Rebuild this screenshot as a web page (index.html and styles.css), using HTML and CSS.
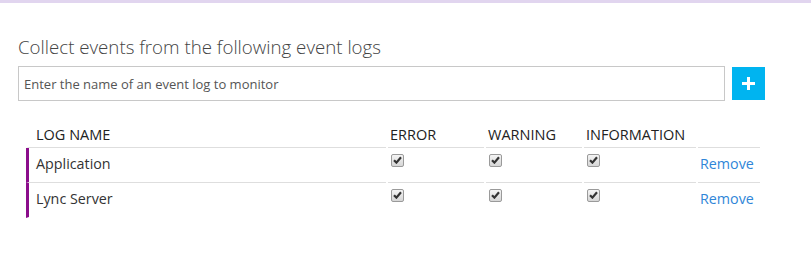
FILE: index.html
```html
<!DOCTYPE html>
<html lang="en">
<head>
    <meta charset="UTF-8">
    <meta name="viewport" content="width=device-width, initial-scale=1.0">
    <title>Event logs</title>
    <link rel="stylesheet" href="styles.css">
</head>
<body>
    <div class="topbar"></div>
    <div class="panel">
        <div class="title">Collect events from the following event logs</div>
        <div class="addrow">
            <input type="text" class="logname" placeholder="Enter the name of an event log to monitor">
            <button class="addbtn" title="Add">
                <svg width="13" height="13" viewBox="0 0 13 13"><path d="M6.5 0V13M0 6.5H13" stroke="#fff" stroke-width="3"/></svg>
            </button>
        </div>
        <div class="logs">
            <div class="row head">
                <div class="cell name">LOG NAME</div>
                <div class="cell">ERROR</div>
                <div class="cell">WARNING</div>
                <div class="cell">INFORMATION</div>
                <div class="cell"></div>
            </div>
            <div class="row">
                <div class="cell name">Application</div>
                <div class="cell"><span class="check"><svg width="9" height="8" viewBox="0 0 9 8"><path d="M1 4.2L3.4 6.6L8 1.2" fill="none" stroke="#333" stroke-width="2.2"/></svg></span></div>
                <div class="cell"><span class="check"><svg width="9" height="8" viewBox="0 0 9 8"><path d="M1 4.2L3.4 6.6L8 1.2" fill="none" stroke="#333" stroke-width="2.2"/></svg></span></div>
                <div class="cell"><span class="check"><svg width="9" height="8" viewBox="0 0 9 8"><path d="M1 4.2L3.4 6.6L8 1.2" fill="none" stroke="#333" stroke-width="2.2"/></svg></span></div>
                <div class="cell"><a href="#" class="remove">Remove</a></div>
            </div>
            <div class="row last">
                <div class="cell name">Lync Server</div>
                <div class="cell"><span class="check"><svg width="9" height="8" viewBox="0 0 9 8"><path d="M1 4.2L3.4 6.6L8 1.2" fill="none" stroke="#333" stroke-width="2.2"/></svg></span></div>
                <div class="cell"><span class="check"><svg width="9" height="8" viewBox="0 0 9 8"><path d="M1 4.2L3.4 6.6L8 1.2" fill="none" stroke="#333" stroke-width="2.2"/></svg></span></div>
                <div class="cell"><span class="check"><svg width="9" height="8" viewBox="0 0 9 8"><path d="M1 4.2L3.4 6.6L8 1.2" fill="none" stroke="#333" stroke-width="2.2"/></svg></span></div>
                <div class="cell"><a href="#" class="remove">Remove</a></div>
            </div>
        </div>
    </div>
</body>
</html>
```

FILE: styles.css
```css
body{
    margin: 0;
    background: #fff;
    font-family: "Open Sans", "Noto Sans", sans-serif;
    color: #333;
}
.topbar{
    height: 3px;
    background: #e1d5ef;
}
.panel{
    padding: 31px 0 0 18px;
}
.title{
    font-size: 18.7px;
    font-weight: 300;
    color: #444;
    line-height: 26px;
    margin-bottom: 6px;
}
.addrow{
    display: flex;
    align-items: center;
    gap: 7px;
}
.logname{
    box-sizing: border-box;
    width: 707px;
    height: 35px;
    border: 1px solid #c8c8c8;
    padding: 0 5px;
    font-family: inherit;
    font-size: 13px;
    color: #333;
    outline: none;
}
.logname::placeholder{
    color: #555;
}
.addbtn{
    width: 33px;
    height: 33px;
    border: none;
    padding: 0;
    background: #00b4f0;
    display: flex;
    align-items: center;
    justify-content: center;
}
.logs{
    margin: 20px 0 0 8px;
    width: 734px;
}
.row{
    display: grid;
    grid-template-columns: 360px 96px 96px 112px 62px;
    column-gap: 2px;
}
.cell{
    box-sizing: border-box;
    height: 35px;
    border-bottom: 1px solid #dedede;
    padding: 0 0 4px 2px;
    display: flex;
    align-items: center;
    font-size: 14.3px;
}
.head .cell{
    height: 27px;
    align-items: flex-start;
    padding: 4px 0 0 2px;
    font-size: 14.5px;
    color: #222;
}
.row .name{
    padding-left: 7px;
    border-left: 3px solid #8b0d8b;
}
.head .name{
    border-left-color: transparent;
}
.last .cell{
    border-bottom-color: transparent;
}
.check{
    box-sizing: border-box;
    width: 13px;
    height: 13px;
    margin: -6px 0 0 1px;
    border: 1px solid #9a9a9a;
    border-radius: 2px;
    background: linear-gradient(#f4f4f4, #d6d6d6);
    display: flex;
    align-items: center;
    justify-content: center;
}
.remove{
    color: #2f86d8;
    text-decoration: none;
    font-size: 14.3px;
}
```
